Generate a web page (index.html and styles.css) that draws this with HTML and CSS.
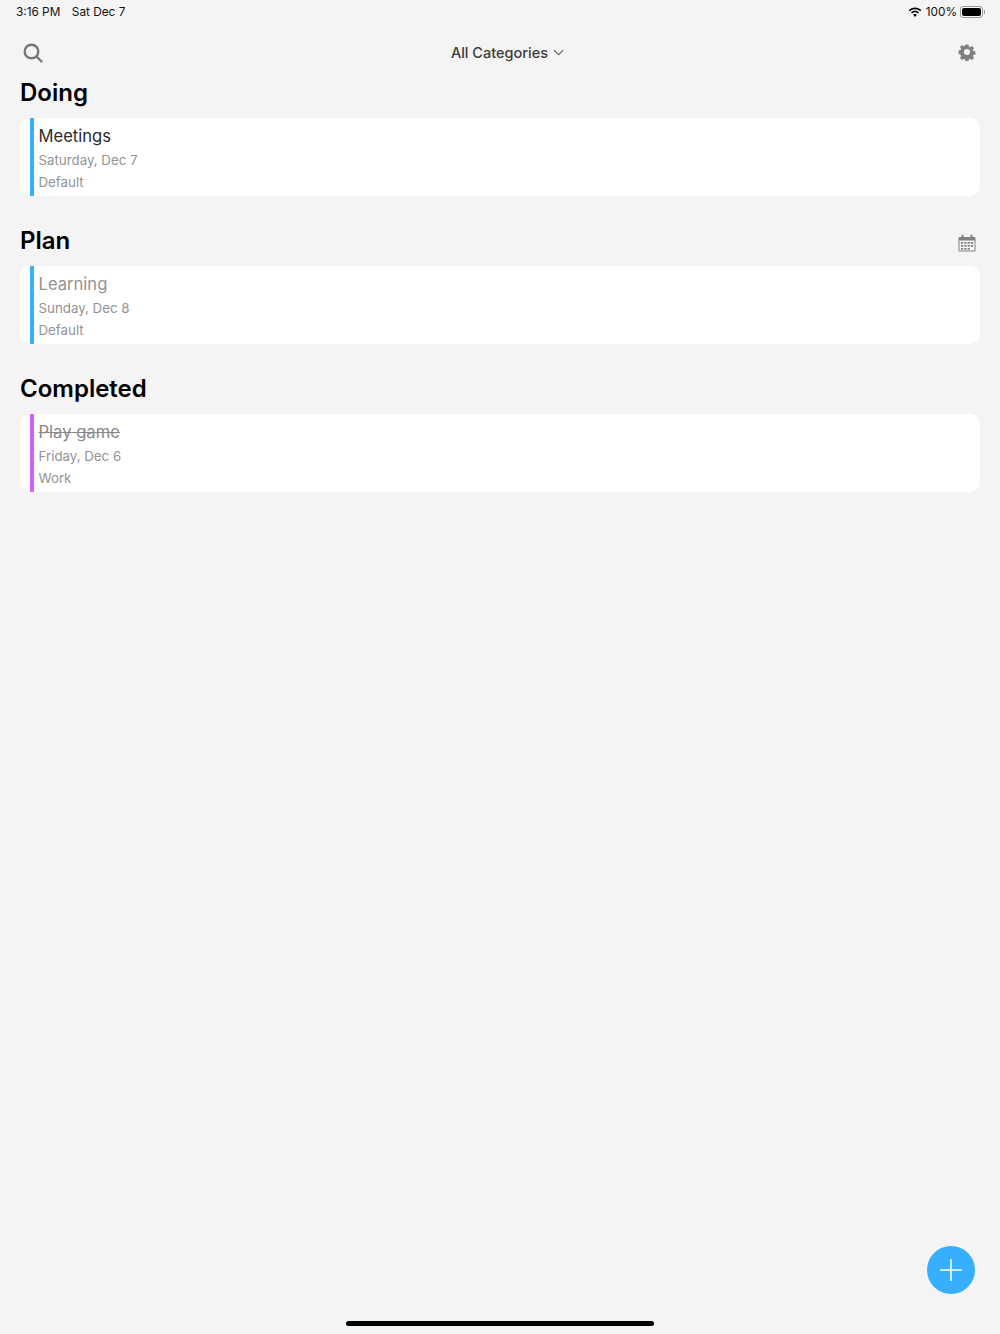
FILE: index.html
```html
<!DOCTYPE html>
<html>
<head>
  <meta charset="UTF-8">
  <title>Tasks</title>
  <link rel="stylesheet" href="styles.css">
</head>
<body>
  <div class="status-bar">
    <div class="status-left">
      <span>3:16 PM</span>
      <span>Sat Dec 7</span>
    </div>
    <div class="status-right">
      <svg class="wifi" viewBox="0 0 16 12">
        <path d="M8 2.2c2.3 0 4.4.9 6 2.4l1.2-1.3C13.300 1.400 10.800.3 8 .3S2.700 1.400.8 3.300L2 4.600c1.600-1.500 3.700-2.400 6-2.400z"/>
        <path d="M8 5.800c1.300 0 2.500.5 3.400 1.300l1.300-1.300C11.400 4.600 9.800 3.900 8 3.900s-3.400.7-4.700 1.900l1.300 1.300C5.500 6.300 6.700 5.800 8 5.800z"/>
        <path d="M8 7.700c-.9 0-1.600.3-2.200.8L8 11l2.200-2.500c-.6-.5-1.300-.8-2.200-.8z"/>
      </svg>
      <span>100%</span>
      <div class="battery"><div class="battery-fill"></div></div>
      <div class="battery-cap"></div>
    </div>
  </div>

  <div class="toolbar">
    <svg class="icon-search" viewBox="0 0 20 20" fill="none" stroke="#777" stroke-width="2.400">
      <circle cx="8.500" cy="8.500" r="6.800"/>
      <path d="M13.500 13.500l5 5" stroke-linecap="round"/>
    </svg>
    <div class="category-select">
      <span>All Categories</span>
      <svg viewBox="0 0 12 7" fill="none" stroke="#555" stroke-width="1.100">
        <path d="M1 1l5 5 5-5"/>
      </svg>
    </div>
    <svg class="icon-gear" viewBox="0 0 24 24">
      <path fill="#808080" fill-rule="evenodd" d="M9.800 1h4.400l.7 3.100 1.700.7 2.700-1.700 3.100 3.100-1.700 2.700.7 1.700 3.100.7v4.400l-3.100.7-.7 1.700 1.700 2.700-3.100 3.100-2.700-1.700-1.700.7-.7 3.100H9.800l-.7-3.100-1.700-.7-2.700 1.700-3.100-3.100 1.700-2.700-.7-1.700L-.5 14.200V9.800l3.100-.7.7-1.700-1.700-2.700 3.100-3.100 2.700 1.700 1.700-.7zM12 7.500a4.500 4.500 0 1 0 0 9 4.500 4.500 0 0 0 0-9z" transform="translate(1.200 1.200) scale(.9)"/>
    </svg>
  </div>

  <section class="section">
    <div class="section-head">
      <h2>Doing</h2>
    </div>
    <div class="card">
      <div class="card-bar blue"></div>
      <div class="card-body">
        <div class="card-title">Meetings</div>
        <div class="card-meta">Saturday, Dec 7</div>
        <div class="card-meta">Default</div>
      </div>
    </div>
  </section>

  <section class="section">
    <div class="section-head">
      <h2>Plan</h2>
      <svg class="icon-calendar" viewBox="0 0 18 18">
        <path fill="#808080" d="M1.500 3h2V1.500a1 1 0 0 1 2 0V3h7V1.500a1 1 0 0 1 2 0V3h2a1 1 0 0 1 1 1v12.500a1 1 0 0 1-1 1h-15a1 1 0 0 1-1-1V4a1 1 0 0 1 1-1z"/>
        <rect x="1.500" y="6.500" width="15" height="10" fill="#f4f4f4"/>
        <path fill="#808080" d="M3 8h2.200v1.800H3zM6.300 8h2.200v1.800H6.300zM9.600 8h2.200v1.800H9.600zM12.900 8h2.200v1.800h-2.200zM3 11h2.200v1.800H3zM6.300 11h2.200v1.800H6.300zM9.600 11h2.200v1.800H9.600zM12.900 11h2.200v1.800h-2.200zM6.300 14h2.200v1.800H6.300zM9.600 14h2.200v1.800H9.600zM3 14h2.200v1.800H3z"/>
      </svg>
    </div>
    <div class="card">
      <div class="card-bar blue"></div>
      <div class="card-body">
        <div class="card-title muted">Learning</div>
        <div class="card-meta">Sunday, Dec 8</div>
        <div class="card-meta">Default</div>
      </div>
    </div>
  </section>

  <section class="section">
    <div class="section-head">
      <h2>Completed</h2>
    </div>
    <div class="card">
      <div class="card-bar purple"></div>
      <div class="card-body">
        <div class="card-title muted done">Play game</div>
        <div class="card-meta">Friday, Dec 6</div>
        <div class="card-meta">Work</div>
      </div>
    </div>
  </section>

  <button class="fab">
    <svg viewBox="0 0 22 22" stroke="#fff" stroke-width="1.500">
      <path d="M11 0v22M0 11h22"/>
    </svg>
  </button>
  <div class="home-bar"></div>
</body>
</html>
```

FILE: styles.css
```css
:root {
  --background: #f4f4f4;
  --text-primary: #2b2b2b;
  --text-secondary: #939393;
  --blue: #38aeff;
  --purple: #d461fb;
}

html, body {
  height: 1334px;
  overflow: hidden;
}

body {
  position: relative;
  margin: 0;
  background: var(--background);
  color: var(--text-primary);
  font-family: Inter, "Liberation Sans", sans-serif;
  -webkit-font-smoothing: antialiased;
}

.status-bar {
  display: flex;
  justify-content: space-between;
  align-items: center;
  height: 24px;
  padding: 0 15px 0 16px;
  font-size: 11.800px;
  color: #111;
}

.status-left {
  display: flex;
  gap: 11.500px;
}

.status-right {
  display: flex;
  align-items: center;
}

.wifi {
  width: 14px;
  height: 11px;
  margin-right: 4px;
  fill: #000;
}

.battery {
  width: 23px;
  height: 12px;
  margin-left: 3px;
  padding: 1px;
  box-sizing: border-box;
  border: 1px solid #999;
  border-radius: 3px;
}

.battery-fill {
  height: 100%;
  background: #000;
  border-radius: 2px;
}

.battery-cap {
  width: 1px;
  height: 4px;
  margin-left: 1px;
  background: #999;
}

.toolbar {
  display: flex;
  justify-content: space-between;
  align-items: center;
  height: 30px;
  margin-top: 14px;
  padding: 0 24px 0 23px;
}

.icon-search {
  width: 20px;
  height: 20px;
}

.icon-gear {
  width: 18px;
  height: 18px;
  margin-bottom: 2px;
}

.category-select {
  display: flex;
  align-items: center;
  gap: 5px;
  margin-left: 14px;
  margin-bottom: 2px;
  font-size: 14.500px;
  font-weight: 500;
  color: #3a3a3a;
}

.category-select svg {
  width: 11px;
  height: 7px;
}

.section {
  padding: 0 20px;
  margin-bottom: 20px;
}

.section-head {
  display: flex;
  justify-content: space-between;
  align-items: center;
  height: 46px;
  padding-right: 4px;
  margin-bottom: 4px;
}

h2 {
  margin: 3px 0 0;
  font-size: 24px;
  font-weight: 600;
  color: #000;
}

.icon-calendar {
  width: 18px;
  height: 18px;
  margin-top: 8px;
}

.card {
  display: flex;
  height: 78px;
  background: #fff;
  border-radius: 10px;
  overflow: hidden;
}

.card-bar {
  width: 4px;
  margin-left: 10px;
}

.card-bar.blue {
  background: var(--blue);
}

.card-bar.purple {
  background: var(--purple);
}

.card-body {
  padding-left: 4.500px;
}

.card-title {
  height: 27px;
  margin-top: 4px;
  font-size: 16.600px;
  line-height: 29px;
}

.card-title.muted {
  color: var(--text-secondary);
}

.card-title.done {
  text-decoration: line-through;
  color: #888;
}

.card-meta {
  height: 22px;
  font-size: 13.300px;
  line-height: 22px;
  color: var(--text-secondary);
}

.fab {
  position: absolute;
  left: 927px;
  top: 1246px;
  display: flex;
  align-items: center;
  justify-content: center;
  width: 48px;
  height: 48px;
  padding: 0;
  border: none;
  border-radius: 50%;
  background: var(--blue);
}

.fab svg {
  width: 22px;
  height: 22px;
}

.home-bar {
  position: absolute;
  left: 346px;
  top: 1321px;
  width: 308px;
  height: 5px;
  border-radius: 3px;
  background: #000;
}
```
